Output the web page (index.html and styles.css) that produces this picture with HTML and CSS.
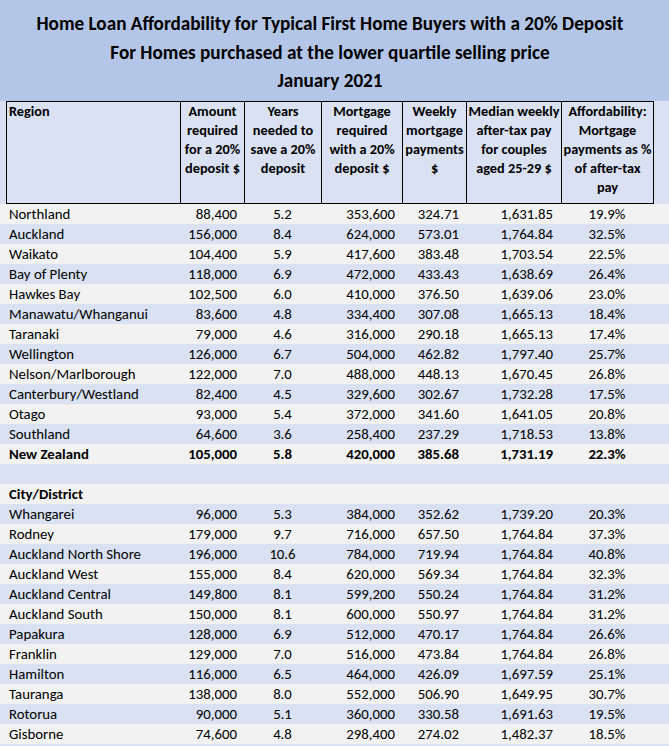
FILE: index.html
```html
<!DOCTYPE html>
<html lang="en">
<head>
<meta charset="utf-8">
<title>Home Loan Affordability</title>
<link rel="stylesheet" href="styles.css">
</head>
<body>
<div class="title">
  <div class="title-inner">
    <div>Home Loan Affordability for Typical First Home Buyers with a 20% Deposit</div>
    <div>For Homes purchased at the lower quartile selling price</div>
    <div>January 2021</div>
  </div>
</div>
<div class="head">
  <div class="head-grid">
    <div class="hc hc-left">Region</div>
    <div class="hc">Amount<br>required<br>for a 20%<br>deposit $</div>
    <div class="hc">Years<br>needed to<br>save a 20%<br>deposit</div>
    <div class="hc">Mortgage<br>required<br>with a 20%<br>deposit $</div>
    <div class="hc">Weekly<br>mortgage<br>payments<br>$</div>
    <div class="hc">Median weekly<br>after-tax pay<br>for couples<br>aged 25-29 $</div>
    <div class="hc">Affordability:<br>Mortgage<br>payments as %<br>of after-tax<br>pay</div>
  </div>
</div>
<div class="rows">
  <div class="row"><span></span><span class="c-name">Northland</span><span class="c-r">88,400</span><span class="c-c">5.2</span><span class="c-r">353,600</span><span class="c-r">324.71</span><span class="c-r2">1,631.85</span><span class="c-c">19.9%</span><span></span></div>
  <div class="row"><span></span><span class="c-name">Auckland</span><span class="c-r">156,000</span><span class="c-c">8.4</span><span class="c-r">624,000</span><span class="c-r">573.01</span><span class="c-r2">1,764.84</span><span class="c-c">32.5%</span><span></span></div>
  <div class="row"><span></span><span class="c-name">Waikato</span><span class="c-r">104,400</span><span class="c-c">5.9</span><span class="c-r">417,600</span><span class="c-r">383.48</span><span class="c-r2">1,703.54</span><span class="c-c">22.5%</span><span></span></div>
  <div class="row"><span></span><span class="c-name">Bay of Plenty</span><span class="c-r">118,000</span><span class="c-c">6.9</span><span class="c-r">472,000</span><span class="c-r">433.43</span><span class="c-r2">1,638.69</span><span class="c-c">26.4%</span><span></span></div>
  <div class="row"><span></span><span class="c-name">Hawkes Bay</span><span class="c-r">102,500</span><span class="c-c">6.0</span><span class="c-r">410,000</span><span class="c-r">376.50</span><span class="c-r2">1,639.06</span><span class="c-c">23.0%</span><span></span></div>
  <div class="row"><span></span><span class="c-name">Manawatu/Whanganui</span><span class="c-r">83,600</span><span class="c-c">4.8</span><span class="c-r">334,400</span><span class="c-r">307.08</span><span class="c-r2">1,665.13</span><span class="c-c">18.4%</span><span></span></div>
  <div class="row"><span></span><span class="c-name">Taranaki</span><span class="c-r">79,000</span><span class="c-c">4.6</span><span class="c-r">316,000</span><span class="c-r">290.18</span><span class="c-r2">1,665.13</span><span class="c-c">17.4%</span><span></span></div>
  <div class="row"><span></span><span class="c-name">Wellington</span><span class="c-r">126,000</span><span class="c-c">6.7</span><span class="c-r">504,000</span><span class="c-r">462.82</span><span class="c-r2">1,797.40</span><span class="c-c">25.7%</span><span></span></div>
  <div class="row"><span></span><span class="c-name">Nelson/Marlborough</span><span class="c-r">122,000</span><span class="c-c">7.0</span><span class="c-r">488,000</span><span class="c-r">448.13</span><span class="c-r2">1,670.45</span><span class="c-c">26.8%</span><span></span></div>
  <div class="row"><span></span><span class="c-name">Canterbury/Westland</span><span class="c-r">82,400</span><span class="c-c">4.5</span><span class="c-r">329,600</span><span class="c-r">302.67</span><span class="c-r2">1,732.28</span><span class="c-c">17.5%</span><span></span></div>
  <div class="row"><span></span><span class="c-name">Otago</span><span class="c-r">93,000</span><span class="c-c">5.4</span><span class="c-r">372,000</span><span class="c-r">341.60</span><span class="c-r2">1,641.05</span><span class="c-c">20.8%</span><span></span></div>
  <div class="row"><span></span><span class="c-name">Southland</span><span class="c-r">64,600</span><span class="c-c">3.6</span><span class="c-r">258,400</span><span class="c-r">237.29</span><span class="c-r2">1,718.53</span><span class="c-c">13.8%</span><span></span></div>
  <div class="row bold"><span></span><span class="c-name">New Zealand</span><span class="c-r">105,000</span><span class="c-c">5.8</span><span class="c-r">420,000</span><span class="c-r">385.68</span><span class="c-r2">1,731.19</span><span class="c-c">22.3%</span><span></span></div>
  <div class="row"><span></span><span class="c-name"></span><span></span><span></span><span></span><span></span><span></span><span></span><span></span></div>
  <div class="row bold"><span></span><span class="c-name">City/District</span><span></span><span></span><span></span><span></span><span></span><span></span><span></span></div>
  <div class="row"><span></span><span class="c-name">Whangarei</span><span class="c-r">96,000</span><span class="c-c">5.3</span><span class="c-r">384,000</span><span class="c-r">352.62</span><span class="c-r2">1,739.20</span><span class="c-c">20.3%</span><span></span></div>
  <div class="row"><span></span><span class="c-name">Rodney</span><span class="c-r">179,000</span><span class="c-c">9.7</span><span class="c-r">716,000</span><span class="c-r">657.50</span><span class="c-r2">1,764.84</span><span class="c-c">37.3%</span><span></span></div>
  <div class="row"><span></span><span class="c-name">Auckland North Shore</span><span class="c-r">196,000</span><span class="c-c">10.6</span><span class="c-r">784,000</span><span class="c-r">719.94</span><span class="c-r2">1,764.84</span><span class="c-c">40.8%</span><span></span></div>
  <div class="row"><span></span><span class="c-name">Auckland West</span><span class="c-r">155,000</span><span class="c-c">8.4</span><span class="c-r">620,000</span><span class="c-r">569.34</span><span class="c-r2">1,764.84</span><span class="c-c">32.3%</span><span></span></div>
  <div class="row"><span></span><span class="c-name">Auckland Central</span><span class="c-r">149,800</span><span class="c-c">8.1</span><span class="c-r">599,200</span><span class="c-r">550.24</span><span class="c-r2">1,764.84</span><span class="c-c">31.2%</span><span></span></div>
  <div class="row"><span></span><span class="c-name">Auckland South</span><span class="c-r">150,000</span><span class="c-c">8.1</span><span class="c-r">600,000</span><span class="c-r">550.97</span><span class="c-r2">1,764.84</span><span class="c-c">31.2%</span><span></span></div>
  <div class="row"><span></span><span class="c-name">Papakura</span><span class="c-r">128,000</span><span class="c-c">6.9</span><span class="c-r">512,000</span><span class="c-r">470.17</span><span class="c-r2">1,764.84</span><span class="c-c">26.6%</span><span></span></div>
  <div class="row"><span></span><span class="c-name">Franklin</span><span class="c-r">129,000</span><span class="c-c">7.0</span><span class="c-r">516,000</span><span class="c-r">473.84</span><span class="c-r2">1,764.84</span><span class="c-c">26.8%</span><span></span></div>
  <div class="row"><span></span><span class="c-name">Hamilton</span><span class="c-r">116,000</span><span class="c-c">6.5</span><span class="c-r">464,000</span><span class="c-r">426.09</span><span class="c-r2">1,697.59</span><span class="c-c">25.1%</span><span></span></div>
  <div class="row"><span></span><span class="c-name">Tauranga</span><span class="c-r">138,000</span><span class="c-c">8.0</span><span class="c-r">552,000</span><span class="c-r">506.90</span><span class="c-r2">1,649.95</span><span class="c-c">30.7%</span><span></span></div>
  <div class="row"><span></span><span class="c-name">Rotorua</span><span class="c-r">90,000</span><span class="c-c">5.1</span><span class="c-r">360,000</span><span class="c-r">330.58</span><span class="c-r2">1,691.63</span><span class="c-c">19.5%</span><span></span></div>
  <div class="row"><span></span><span class="c-name">Gisborne</span><span class="c-r">74,600</span><span class="c-c">4.8</span><span class="c-r">298,400</span><span class="c-r">274.02</span><span class="c-r2">1,482.37</span><span class="c-c">18.5%</span><span></span></div>
  <div class="row"><span></span><span class="c-name"></span><span></span><span></span><span></span><span></span><span></span><span></span><span></span></div>
</div>
</body>
</html>
```
FILE: styles.css
```css
html, body {
  margin: 0;
  padding: 0;
  overflow: hidden;
}
body {
  width: 669px;
  height: 746px;
  font-family: Carlito, Calibri, Lato, "Liberation Sans", sans-serif;
  font-size: 14.3px;
  color: #000;
  background: #f2f2f2;
}
.title {
  background: #b4c6e7;
  height: 101px;
  box-sizing: border-box;
  padding: 10px 0 0 6px;
}
.title-inner {
  width: 648px;
  text-align: center;
  font-weight: 700;
  font-size: 19.2px;
  line-height: 28.5px;
}
.head {
  background: #d9e1f2;
  padding-left: 6px;
  display: flex;
}
.head-grid {
  display: grid;
  grid-template-columns: 173px 64px 77px 81px 64px 95px 92px;
  border: 1px solid #000;
}
.hc {
  box-sizing: border-box;
  height: 101px;
  border-left: 1px solid #000;
  text-align: center;
  font-weight: 700;
  line-height: 19px;
  white-space: nowrap;
}
.hc-left {
  border-left: none;
  text-align: left;
  padding-left: 2px;
}
.row {
  display: grid;
  grid-template-columns: 7px 173px 64px 77px 81px 64px 95px 92px 1fr;
  height: 20px;
  line-height: 20px;
  font-size: 14.8px;
  white-space: nowrap;
}
.row:nth-child(even) {
  background: #d9e1f2;
}
.row:nth-child(odd) {
  background: #f2f2f2;
}
.bold {
  font-weight: 700;
}
.c-name {
  padding-left: 2px;
}
.c-r {
  text-align: right;
  padding-right: 7px;
}
.c-r2 {
  text-align: right;
  padding-right: 8px;
}
.c-c {
  text-align: center;
}
```
